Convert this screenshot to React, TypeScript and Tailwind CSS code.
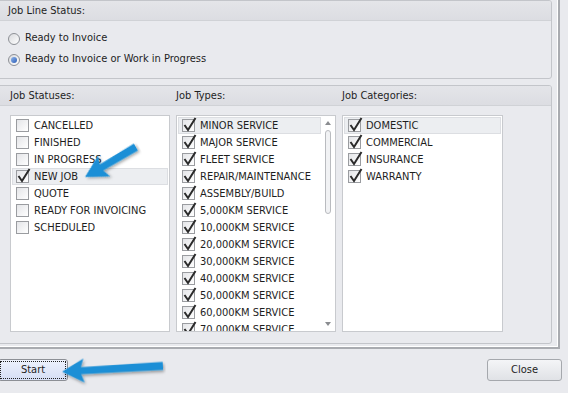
const statuses = [
  { name: "CANCELLED", checked: false },
  { name: "FINISHED", checked: false },
  { name: "IN PROGRESS", checked: false },
  { name: "NEW JOB", checked: true, selected: true },
  { name: "QUOTE", checked: false },
  { name: "READY FOR INVOICING", checked: false },
  { name: "SCHEDULED", checked: false },
]

const jobTypes = [
  "MINOR SERVICE",
  "MAJOR SERVICE",
  "FLEET SERVICE",
  "REPAIR/MAINTENANCE",
  "ASSEMBLY/BUILD",
  "5,000KM SERVICE",
  "10,000KM SERVICE",
  "20,000KM SERVICE",
  "30,000KM SERVICE",
  "40,000KM SERVICE",
  "50,000KM SERVICE",
  "60,000KM SERVICE",
  "70,000KM SERVICE",
]

const categories = ["DOMESTIC", "COMMERCIAL", "INSURANCE", "WARRANTY"]

function CheckBox({ checked }: { checked: boolean }) {
  return (
    <div className="relative w-[13px] h-[13px] shrink-0 border border-[#9a9ca0] bg-gradient-to-br from-[#e4e5e8] to-[#ffffff]">
      {checked && (
        <svg
          className="absolute left-[0px] -top-[3px]"
          width="14"
          height="15"
          viewBox="0 0 14 15"
        >
          <path
            d="M1.5 8 L5 13 L12.5 1"
            fill="none"
            stroke="#2b2b2b"
            strokeWidth="2"
          />
        </svg>
      )}
    </div>
  )
}

function Row({
  label,
  checked,
  selected,
}: {
  label: string
  checked: boolean
  selected?: boolean
}) {
  return (
    <div
      className={
        "flex items-center h-[17px] pl-[3px] gap-[5px] shrink-0 border " +
        (selected ? "bg-[#eceef1] border-[#dcdee2]" : "border-transparent")
      }
    >
      <CheckBox checked={checked} />
      <span className="text-[11px] text-[#1e1e1e] whitespace-nowrap pt-[1px]">
        {label}
      </span>
    </div>
  )
}

function Radio({ checked, label }: { checked: boolean; label: string }) {
  return (
    <div className="flex items-center gap-[5px] h-[21px]">
      <div className="w-[12px] h-[12px] rounded-full border border-[#8d9096] bg-gradient-to-br from-[#d9dadd] to-[#ffffff] flex items-center justify-center">
        {checked && (
          <div className="w-[6px] h-[6px] rounded-full bg-gradient-to-br from-[#8fb4ea] to-[#2e5fb7]" />
        )}
      </div>
      <span className="text-[11px] text-[#1e1e1e]">{label}</span>
    </div>
  )
}

function GroupHeader({ children }: { children: React.ReactNode }) {
  return (
    <div className="h-[20px] pt-[2px] bg-gradient-to-b from-[#e4e5e9] to-[#dcdde2] border-b border-[#d0d2d6] flex items-center text-[11px] text-[#1e1e1e]">
      {children}
    </div>
  )
}

function BlueArrow({
  className,
  rotate,
  length,
}: {
  className: string
  rotate: number
  length: number
}) {
  const w = length
  return (
    <svg
      className={"absolute " + className}
      width={w}
      height="40"
      viewBox={`0 0 ${w} 40`}
      style={{ transform: `rotate(${rotate}deg)` }}
    >
      <defs>
        <filter id={"sh" + rotate} x="-20%" y="-50%" width="140%" height="200%">
          <feDropShadow dx="1" dy="2" stdDeviation="1.5" floodColor="#000" floodOpacity="0.35" />
        </filter>
      </defs>
      <path
        d={`M2 20 L24 8 L21 16.5 L${w - 3} 15.5 L${w - 3} 23.5 L21 23.5 L24 32 Z`}
        fill="#1b8fd6"
        filter={`url(#sh${rotate})`}
      />
    </svg>
  )
}

export default function App() {
  return (
    <div className="relative w-[568px] h-[393px] overflow-hidden bg-[#e9eaee] font-['DejaVu_Sans_Condensed','DejaVu_Sans',sans-serif] [font-stretch:condensed]">
      {/* outer panel */}
      <div className="-ml-[3px] w-[563px] h-[349px] border-r-2 border-b-2 border-r-[#a9abb0] border-b-[#a9abb0] shadow-[inset_-1px_-1px_0_#ffffff] pr-[6px] flex flex-col">
        {/* Job Line Status */}
        <div className="h-[79px] rounded-r-[3px] border border-[#c3c5ca] overflow-hidden bg-[#e9eaee]">
          <GroupHeader>
            <span className="pl-[10px]">Job Line Status:</span>
          </GroupHeader>
          <div className="pl-[10px] pt-[7px]">
            <Radio checked={false} label="Ready to Invoice" />
            <Radio checked label="Ready to Invoice or Work in Progress" />
          </div>
        </div>

        {/* Lists group */}
        <div className="mt-[6px] h-[259px] rounded-r-[3px] border border-[#c3c5ca] overflow-hidden bg-[#e9eaee]">
          <GroupHeader>
            <span className="pl-[12px] w-[178px]">Job Statuses:</span>
            <span className="w-[166px]">Job Types:</span>
            <span>Job Categories:</span>
          </GroupHeader>
          <div className="flex pl-[12px] pt-[9px] gap-[6px]">
            {/* statuses */}
            <div className="w-[160px] h-[217px] bg-white border border-[#c8cace] flex flex-col pt-[1px] px-[1px]">
              {statuses.map((s) => (
                <Row key={s.name} label={s.name} checked={s.checked} selected={s.selected} />
              ))}
            </div>
            {/* types */}
            <div className="w-[160px] h-[217px] bg-white border border-[#c8cace] flex">
              <div className="flex-1 flex flex-col pt-[1px] pl-[1px] overflow-hidden">
                {jobTypes.map((t, i) => (
                  <Row key={t} label={t} checked selected={i === 0} />
                ))}
              </div>
              <div className="w-[14px] flex flex-col items-center py-[5px]">
                <div className="w-0 h-0 border-x-[3px] border-x-transparent border-b-[4px] border-b-[#8a8c90]" />
                <div className="mt-[5px] w-[6px] h-[84px] rounded-[3px] border border-[#b9bbbf] bg-[#f1f2f4]" />
                <div className="flex-1" />
                <div className="w-0 h-0 border-x-[3px] border-x-transparent border-t-[4px] border-t-[#8a8c90]" />
              </div>
            </div>
            {/* categories */}
            <div className="w-[161px] h-[217px] bg-white border border-[#c8cace] flex flex-col pt-[1px] px-[1px]">
              {categories.map((c, i) => (
                <Row key={c} label={c} checked selected={i === 0} />
              ))}
            </div>
          </div>
        </div>
      </div>

      {/* buttons */}
      <div className="flex justify-between items-center mt-[10px] pr-[6px]">
        <button className="-ml-[2px] w-[70px] h-[22px] rounded-[3px] border border-[#8c8f95] bg-gradient-to-b from-[#eef2fd] to-[#d5def5] text-[11px] text-[#1e1e1e] p-[1px]">
          <div className="w-full h-full border border-dotted border-[#222] flex items-center justify-center">
            Start
          </div>
        </button>
        <button className="w-[75px] h-[22px] rounded-[3px] border border-[#a5a8ad] bg-gradient-to-b from-[#f4f5f7] to-[#e0e2e6] text-[11px] text-[#1e1e1e]">
          Close
        </button>
      </div>

      {/* annotation arrows */}
      <BlueArrow className="left-[79px] top-[142px]" rotate={-30} length={64} />
      <BlueArrow className="left-[60px] top-[349px]" rotate={-3} length={106} />
    </div>
  )
}
